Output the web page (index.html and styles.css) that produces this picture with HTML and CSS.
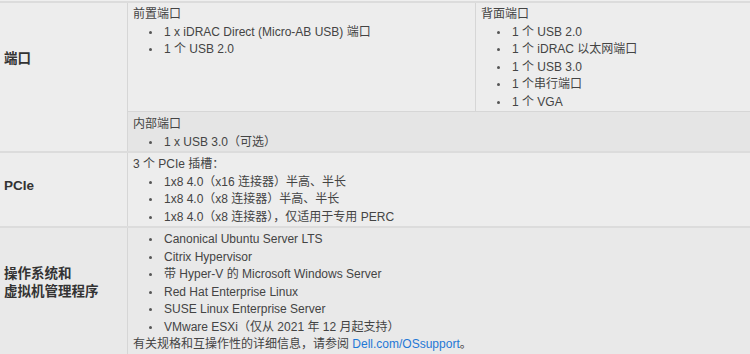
FILE: index.html
```html
<!DOCTYPE html>
<html lang="zh-CN">
<head>
<meta charset="utf-8">
<title>规格</title>
<link rel="stylesheet" href="styles.css">
</head>
<body>
<div class="spec">
  <div class="row row-ports">
    <div class="label label-ports">端口</div>
    <div class="value nested">
      <div class="nested-top">
        <div class="sub sub-front">
          <div class="sub-title">前置端口</div>
          <ul class="list">
            <li>1 x iDRAC Direct (Micro-AB USB) 端口</li>
            <li>1 个 USB 2.0</li>
          </ul>
        </div>
        <div class="sub sub-back">
          <div class="sub-title">背面端口</div>
          <ul class="list">
            <li>1 个 USB 2.0</li>
            <li>1 个 iDRAC 以太网端口</li>
            <li>1 个 USB 3.0</li>
            <li>1 个串行端口</li>
            <li>1 个 VGA</li>
          </ul>
        </div>
      </div>
      <div class="sub sub-internal">
        <div class="sub-title">内部端口</div>
        <ul class="list">
          <li>1 x USB 3.0（可选）</li>
        </ul>
      </div>
    </div>
  </div>
  <div class="row row-pcie">
    <div class="label label-pcie">PCIe</div>
    <div class="value">
      <div class="sub-title">3 个 PCIe 插槽：</div>
      <ul class="list">
        <li>1x8 4.0（x16 连接器）半高、半长</li>
        <li>1x8 4.0（x8 连接器）半高、半长</li>
        <li>1x8 4.0（x8 连接器），仅适用于专用 PERC</li>
      </ul>
    </div>
  </div>
  <div class="row row-os">
    <div class="label label-os">操作系统和<br>虚拟机管理程序</div>
    <div class="value">
      <ul class="list">
        <li>Canonical Ubuntu Server LTS</li>
        <li>Citrix Hypervisor</li>
        <li>带 Hyper-V 的 Microsoft Windows Server</li>
        <li>Red Hat Enterprise Linux</li>
        <li>SUSE Linux Enterprise Server</li>
        <li>VMware ESXi（仅从 2021 年 12 月起支持）</li>
      </ul>
      <div class="note">有关规格和互操作性的详细信息，请参阅 <a class="link" href="#">Dell.com/OSsupport</a>。</div>
    </div>
  </div>
</div>
</body>
</html>
```
FILE: styles.css
```css
html, body {
  margin: 0;
  padding: 0;
  background: #efefef;
}
body {
  font-family: "Liberation Sans", Arial, "Noto Sans CJK SC", sans-serif;
  font-size: 12px;
  line-height: 17.5px;
  color: #444;
}
.spec {
  padding-top: 1px;
}
.row {
  display: grid;
  grid-template-columns: 127px 1fr;
  border-top: 2px solid #dcdcdc;
  background: #ededed;
}
.row-os {
  background: #e9e9e9;
}
.label {
  display: flex;
  align-items: center;
  padding-left: 4px;
  font-weight: bold;
  font-size: 13.5px;
  line-height: 18px;
  color: #333;
}
.label-ports {
  padding-bottom: 37px;
}
.label-pcie {
  padding-bottom: 7px;
}
.label-os {
  padding-bottom: 15px;
}
.value {
  border-left: 1px solid #d6d6d6;
  padding: 3px 5px 0;
}
.nested {
  padding: 0;
}
.nested-top {
  display: flex;
}
.sub {
  padding: 3px 5px 0;
}
.sub-front {
  width: 337px;
}
.sub-back {
  flex: 1;
  border-left: 1px solid #d6d6d6;
}
.sub-internal {
  border-top: 1px solid #d6d6d6;
  background: #e5e5e5;
  padding: 4px 5px 0;
}
.list {
  margin: 0;
  padding-left: 31px;
  list-style: none;
}
.list li::before {
  content: "";
  display: inline-block;
  width: 3px;
  height: 3px;
  border-radius: 50%;
  background: #555;
  margin-left: -15px;
  margin-right: 12px;
  vertical-align: middle;
}
.link {
  color: #1f78d6;
  text-decoration: none;
}
```
